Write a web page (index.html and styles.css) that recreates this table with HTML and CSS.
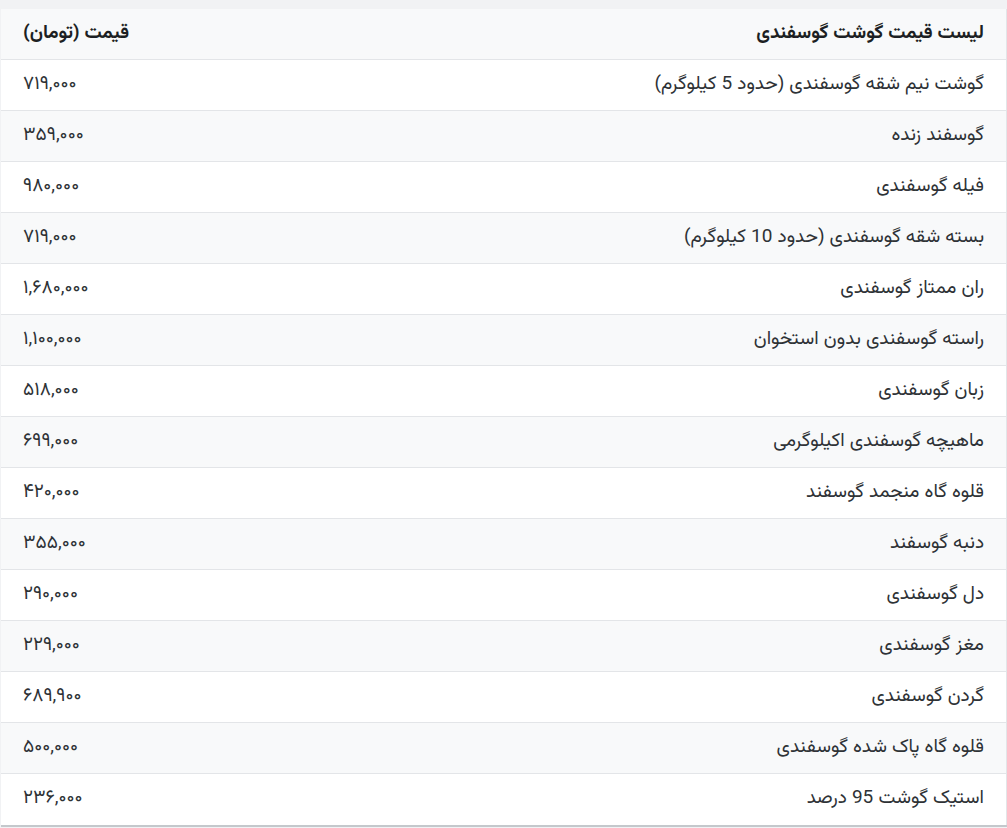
FILE: index.html
```html
<!DOCTYPE html>
<html lang="fa" dir="rtl">
<head>
<meta charset="utf-8">
<link rel="stylesheet" href="styles.css">
</head>
<body>
<div class="wrap">
<table class="prices">
<thead>
<tr><th class="name">لیست قیمت گوشت گوسفندی</th><th class="price">قیمت (تومان)</th></tr>
</thead>
<tbody>
<tr><td class="name">گوشت نیم شقه گوسفندی (حدود 5 کیلوگرم)</td><td class="price">۷۱۹,۰۰۰</td></tr>
<tr><td class="name">گوسفند زنده</td><td class="price">۳۵۹,۰۰۰</td></tr>
<tr><td class="name">فیله گوسفندی</td><td class="price">۹۸۰,۰۰۰</td></tr>
<tr><td class="name">بسته شقه گوسفندی (حدود 10 کیلوگرم)</td><td class="price">۷۱۹,۰۰۰</td></tr>
<tr><td class="name">ران ممتاز گوسفندی</td><td class="price">۱,۶۸۰,۰۰۰</td></tr>
<tr><td class="name">راسته گوسفندی بدون استخوان</td><td class="price">۱,۱۰۰,۰۰۰</td></tr>
<tr><td class="name">زبان گوسفندی</td><td class="price">۵۱۸,۰۰۰</td></tr>
<tr><td class="name">ماهیچه گوسفندی اکیلوگرمی</td><td class="price">۶۹۹,۰۰۰</td></tr>
<tr><td class="name">قلوه گاه منجمد گوسفند</td><td class="price">۴۲۰,۰۰۰</td></tr>
<tr><td class="name">دنبه گوسفند</td><td class="price">۳۵۵,۰۰۰</td></tr>
<tr><td class="name">دل گوسفندی</td><td class="price">۲۹۰,۰۰۰</td></tr>
<tr><td class="name">مغز گوسفندی</td><td class="price">۲۲۹,۰۰۰</td></tr>
<tr><td class="name">گردن گوسفندی</td><td class="price">۶۸۹,۹۰۰</td></tr>
<tr><td class="name">قلوه گاه پاک شده گوسفندی</td><td class="price">۵۰۰,۰۰۰</td></tr>
<tr class="last"><td class="name">استیک گوشت 95 درصد</td><td class="price">۲۳۶,۰۰۰</td></tr>
</tbody>
</table>
</div>
</body>
</html>
```
FILE: styles.css
```css
html, body {
  margin: 0;
  padding: 0;
  background: #f1f2f4;
}
body {
  font-family: "Vazirmatn", "Noto Sans Arabic", "DejaVu Sans", sans-serif;
  color: #212529;
}
.wrap {
  padding-top: 9px;
  width: 1006px;
}
.prices {
  width: 100%;
  border-collapse: collapse;
  background: #ffffff;
  border-right: 1px solid #e3e5e8;
  border-bottom: 2px solid #c4c8cc;
}
.prices th,
.prices td {
  height: 51px;
  padding: 0 22px;
  box-sizing: border-box;
  font-size: 19px;
  text-align: right;
  vertical-align: middle;
  border-bottom: 1px solid #e3e5e8;
}
.prices th {
  height: 50px;
  font-weight: bold;
  background: #f8f9fa;
  color: #1c1f23;
}
.prices td {
  color: #2e3236;
}
.prices .last td {
  height: 53px;
  padding-bottom: 2px;
}
.prices .price {
  text-align: left;
}
.prices tbody tr:nth-child(even) td {
  background: #f8f9fa;
}
```
